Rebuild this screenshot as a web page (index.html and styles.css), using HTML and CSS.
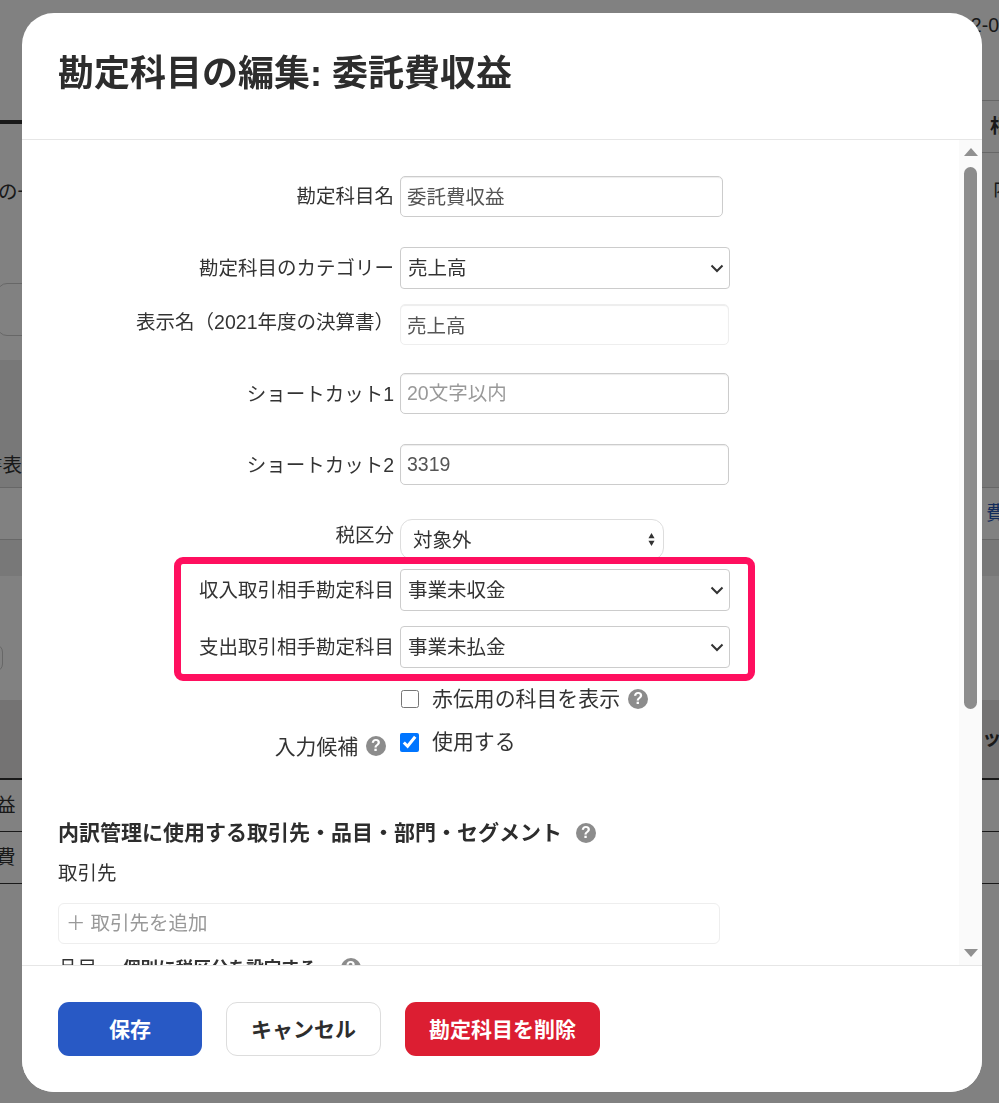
FILE: index.html
```html
<!DOCTYPE html>
<html lang="ja">
<head>
<meta charset="utf-8">
<title>勘定科目の編集</title>
<link rel="stylesheet" href="styles.css">
</head>
<body>
<div class="page">
  <div class="bg-col bg-left">
    <div class="b b-tabs"><span class="tab-bar"></span></div>
    <div class="b b-lead"><span class="bg-text">の一</span></div>
    <div class="b b-search"><span class="bg-input"></span></div>
    <div class="b b-head"><span class="bg-text head-text">書表</span></div>
    <div class="b b-row"></div>
    <div class="b b-sub"></div>
    <div class="b b-tool"><span class="bg-input2"></span></div>
    <div class="b b-thead"></div>
    <div class="b b-tr"><span class="bg-text tr-text">益</span></div>
    <div class="b b-tr"><span class="bg-text tr-text">費</span></div>
  </div>
  <div class="bg-col bg-right">
    <div class="b r-top"><span class="bg-text end">2-0</span></div>
    <div class="b r-th"><span class="bg-text strong">相</span></div>
    <div class="b r-lead"><span class="bg-text">内</span></div>
    <div class="b b-head"></div>
    <div class="b b-row"><span class="bg-text link">費</span></div>
    <div class="b b-sub"></div>
    <div class="b b-tool"></div>
    <div class="b b-thead"><span class="bg-text strong kana">ッ</span></div>
    <div class="b b-tr"></div>
    <div class="b b-tr"></div>
  </div>
</div>

<div class="overlay">
  <div class="modal">
    <header class="modal-head">
      <h1 class="modal-title">勘定科目の編集: 委託費収益</h1>
    </header>
    <div class="modal-body">
      <form class="content">
        <div class="row row-name">
          <label class="lbl lift-1">勘定科目名</label>
          <input class="field w-name" type="text" value="委託費収益">
        </div>
        <div class="row row-cat">
          <label class="lbl">勘定科目のカテゴリー</label>
          <div class="sel">
            <select class="select"><option>売上高</option></select>
            <svg class="chev" viewBox="0 0 14 9"><path d="M1.5 1.5 7 7l5.5-5.5" fill="none" stroke="#333" stroke-width="2"/></svg>
          </div>
        </div>
        <div class="row row-disp">
          <label class="lbl lift-3">表示名（2021年度の決算書）</label>
          <input class="field soft" type="text" value="売上高">
        </div>
        <div class="row row-sc1">
          <label class="lbl">ショートカット1</label>
          <input class="field" type="text" placeholder="20文字以内">
        </div>
        <div class="row row-sc2">
          <label class="lbl">ショートカット2</label>
          <input class="field" type="text" value="3319">
        </div>
        <div class="row row-tax">
          <label class="lbl lift-5">税区分</label>
          <div class="sel w-tax">
            <select class="select round"><option>対象外</option></select>
            <svg class="updown" viewBox="0 0 8 15"><path d="M4 0 7.5 6h-7zM4 15 .5 9h7z" fill="#333"/></svg>
          </div>
        </div>
        <div class="row row-inc">
          <label class="lbl">収入取引相手勘定科目</label>
          <div class="sel">
            <select class="select"><option>事業未収金</option></select>
            <svg class="chev" viewBox="0 0 14 9"><path d="M1.5 1.5 7 7l5.5-5.5" fill="none" stroke="#333" stroke-width="2"/></svg>
          </div>
        </div>
        <div class="row row-exp">
          <label class="lbl">支出取引相手勘定科目</label>
          <div class="sel">
            <select class="select"><option>事業未払金</option></select>
            <svg class="chev" viewBox="0 0 14 9"><path d="M1.5 1.5 7 7l5.5-5.5" fill="none" stroke="#333" stroke-width="2"/></svg>
          </div>
        </div>
        <div class="row row-red">
          <span class="lbl"></span>
          <div class="check">
            <input class="cb cb-off" type="checkbox">
            <span class="check-text off">赤伝用の科目を表示</span>
            <span class="help">?</span>
          </div>
        </div>
        <div class="row row-sug">
          <span class="lbl lbl-help drop-5">入力候補 <span class="help">?</span></span>
          <div class="check">
            <input class="cb cb-on" type="checkbox" checked>
            <span class="check-text">使用する</span>
          </div>
        </div>
        <h2 class="section">内訳管理に使用する取引先・品目・部門・セグメント<span class="help">?</span></h2>
        <div class="plain">取引先</div>
        <div class="tagbox"><span class="plus">＋</span>取引先を追加</div>
        <div class="plain item">品目<span class="item-opt">個別に税区分を設定する</span><span class="help">?</span></div>
      </form>
      <div class="scrollbar">
        <span class="arrow up"></span>
        <span class="thumb"></span>
        <span class="arrow down"></span>
      </div>
    </div>
    <footer class="modal-foot">
      <button class="btn save" type="button">保存</button>
      <button class="btn cancel" type="button">キャンセル</button>
      <button class="btn del" type="button">勘定科目を削除</button>
    </footer>
  </div>
  <div class="highlight"></div>
</div>
</body>
</html>
```

FILE: styles.css
```css
* { box-sizing: border-box; }
html, body { margin: 0; height: 100%; overflow: hidden; }
body {
  font-family: "Liberation Sans", "Noto Sans CJK JP", sans-serif;
  font-size: 19.5px;
  color: #333;
  background: #fff;
}

/* page behind the dialog */
.page { height: 1103px; display: flex; justify-content: space-between; overflow: hidden; }
.bg-col { display: flex; flex-direction: column; }
.bg-left { width: 22px; }
.bg-right { width: 60px; }
.b { position: relative; display: flex; align-items: center; white-space: nowrap; overflow: hidden; flex: none; }
.bg-text { display: block; line-height: 1; flex: none; }
.bg-text.end { margin-left: auto; }
.head-text { margin-left: -17px; }
.tr-text { margin-left: -4px; }
.bg-right .b { padding-left: 22px; }
.bg-text.strong { font-weight: 700; margin-left: 29px; }
.bg-text.kana { margin-left: 21px; }
.bg-text.link { color: #2455b5; margin-left: 25px; }

.b-tabs { height: 140px; align-items: flex-start; padding-top: 120px; }
.tab-bar { width: 100%; height: 4px; background: #333; }
.b-lead { height: 115px; align-items: flex-start; padding-top: 43px; }
.b-lead .bg-text { margin-left: -2px; }
.b-search { height: 105px; align-items: flex-start; padding-top: 28px; }
.bg-input { display: block; flex: none; width: 60px; height: 53px; margin-left: -3px; border: 1px solid #ccc; border-radius: 10px; }
.b-head { height: 128px; background: #eee; border-bottom: 1px solid #ccc; align-items: flex-end; padding-bottom: 12px; }
.b-row { height: 52px; border-bottom: 1px solid #ccc; }
.b-sub { height: 36px; background: #eee; }
.b-tool { height: 124px; }
.bg-input2 { display: block; flex: none; width: 20px; height: 28px; margin-left: -17px; margin-top: 40px; border: 1px solid #ccc; border-radius: 8px; }
.b-thead { height: 80px; background: #e6e4e4; border-bottom: 2px solid #333; }
.b-tr { height: 52px; border-bottom: 1px solid #333; }
.r-top { height: 100px; align-items: flex-start; padding-top: 16px; }
.r-th { height: 53px; border-top: 1px solid #ccc; border-bottom: 1px solid #ccc; }
.r-lead { height: 207px; align-items: flex-start; padding-top: 27px; }
.r-lead .bg-text { margin-left: 32px; }

.overlay {
  position: fixed; inset: 0;
  background: rgba(0, 0, 0, .495);
  display: flex;
  padding: 13px 17px 11px 22px;
}

/* dialog */
.modal { flex: 1; display: flex; flex-direction: column; background: #fff; border-radius: 32px; overflow: hidden; }
.modal-head { flex: none; height: 127px; padding: 34px 36px 0; border-bottom: 1px solid #e6e6e6; }
.modal-title { margin: 0; font-size: 36px; line-height: 54px; font-weight: 700; color: #2d2d2d; }
.modal-body { flex: 1; min-height: 0; display: flex; }
.content { flex: 1; min-width: 0; overflow: hidden; padding: 36px 0 0 36px; }

.scrollbar { flex: none; width: 23px; background: #fafafa; display: flex; flex-direction: column; align-items: center; padding-top: 8px; }
.arrow { display: block; width: 0; height: 0; border-left: 7.5px solid transparent; border-right: 7.5px solid transparent; }
.arrow.up { border-bottom: 8px solid #909090; }
.arrow.down { border-top: 8px solid #909090; margin-top: 240px; }
.thumb { display: block; width: 13px; height: 542px; margin-top: 11px; border-radius: 6.5px; background: #8c8c8c; }

/* form rows */
.row { display: grid; grid-template-columns: 336px 1fr; column-gap: 6px; align-items: center; }
.lbl { text-align: right; white-space: nowrap; line-height: 28px; }
.lift-1 { transform: translateY(-1px); }
.lift-3 { transform: translateY(-3px); }
.lift-5 { transform: translateY(-5px); }
.row-cat { margin-top: 30px; }
.row-disp { margin-top: 15px; }
.row-sc1 { margin-top: 28px; }
.row-sc2 { margin-top: 30px; }
.row-tax { margin-top: 34px; }
.row-inc { margin-top: 9px; }
.row-exp { margin-top: 15px; }
.row-red { margin-top: 17px; }
.row-sug { margin-top: 15px; }

.field {
  display: block; width: 329px; height: 41px; padding: 0 6px;
  font: inherit; color: #555;
  border: 1px solid #ccc; border-radius: 5px;
  box-shadow: inset 0 1px 1px rgba(0, 0, 0, .075);
  background: #fff; outline: 0;
}
.field::placeholder { color: #999; opacity: 1; }
.w-name { width: 323px; padding-bottom: 2px; }
.soft { border-color: #eee; }

.sel { position: relative; width: 330px; }
.w-tax { width: 264px; }
.select {
  display: block; width: 100%; height: 42px; padding: 0 30px 0 7px;
  font: inherit; color: #333; background: #fff;
  border: 1px solid #ccc; border-radius: 4px;
  appearance: none; outline: 0;
}
.select.round { height: 41px; padding: 0 30px 0 12px; border-color: #ddd; border-radius: 12px; }
.chev { position: absolute; right: 6px; top: 17px; width: 14px; height: 9px; pointer-events: none; }
.updown { position: absolute; right: 9px; top: 13px; width: 7px; height: 15px; pointer-events: none; }

.check { display: flex; align-items: center; height: 28px; }
.check-text { margin-left: 13px; line-height: 28px; font-size: 20.9px; }
.check-text.off { margin-left: 12px; }
.cb { margin: 0; flex: none; }
.cb-off { width: 18px; height: 18px; margin: 0 1px; }
.cb-on { width: 19px; height: 19px; }
.help {
  display: inline-block; flex: none; width: 20px; height: 20px; margin-left: 8px;
  border-radius: 50%; background: #8c8c8c; color: #fff;
  font: 700 16px/20px "Liberation Sans", sans-serif; text-align: center; vertical-align: middle;
}
.lbl-help { padding-right: 8px; font-size: 20.9px; }
.lbl-help .help { margin-left: 2px; transform: translateY(-2px); }
.drop-5 { transform: translateY(5px); }

.section { margin: 61px 0 0; font-size: 21px; line-height: 32px; font-weight: 700; color: #2d2d2d; }
.section .help { margin-left: 14px; margin-top: -3px; }
.plain { margin-top: 10px; line-height: 28px; }
.tagbox {
  width: 662px; height: 41px; margin-top: 16px; padding: 0 7px; line-height: 38px;
  color: #999; border: 1px solid #eee; border-radius: 6px;
}
.plus { margin-right: 5px; }
.item { margin-top: 10px; display: flex; align-items: center; }
.item-opt { margin-left: 26px; font-size: 17.6px; font-weight: 700; }
.item .help { margin-left: 24px; }

/* footer */
.modal-foot { flex: none; height: 127px; padding: 36px 36px 0; border-top: 1px solid #e6e6e6; display: flex; align-items: flex-start; gap: 24px; background: #fff; }
.btn { height: 54px; padding: 0; font: 700 21px/1 "Liberation Sans", "Noto Sans CJK JP", sans-serif; border-radius: 11px; border: 0; }
.save { width: 144px; background: #2859c5; color: #fff; }
.cancel { width: 155px; background: #fff; color: #2d2d2d; border: 1px solid #ddd; }
.del { width: 195px; background: #dc1e32; color: #fff; }

/* annotation drawn over the screenshot */
.highlight {
  position: absolute; left: 174px; top: 557px; width: 581px; height: 124px;
  border: 7px solid #ff0f5f; border-radius: 9px; pointer-events: none;
}
```
